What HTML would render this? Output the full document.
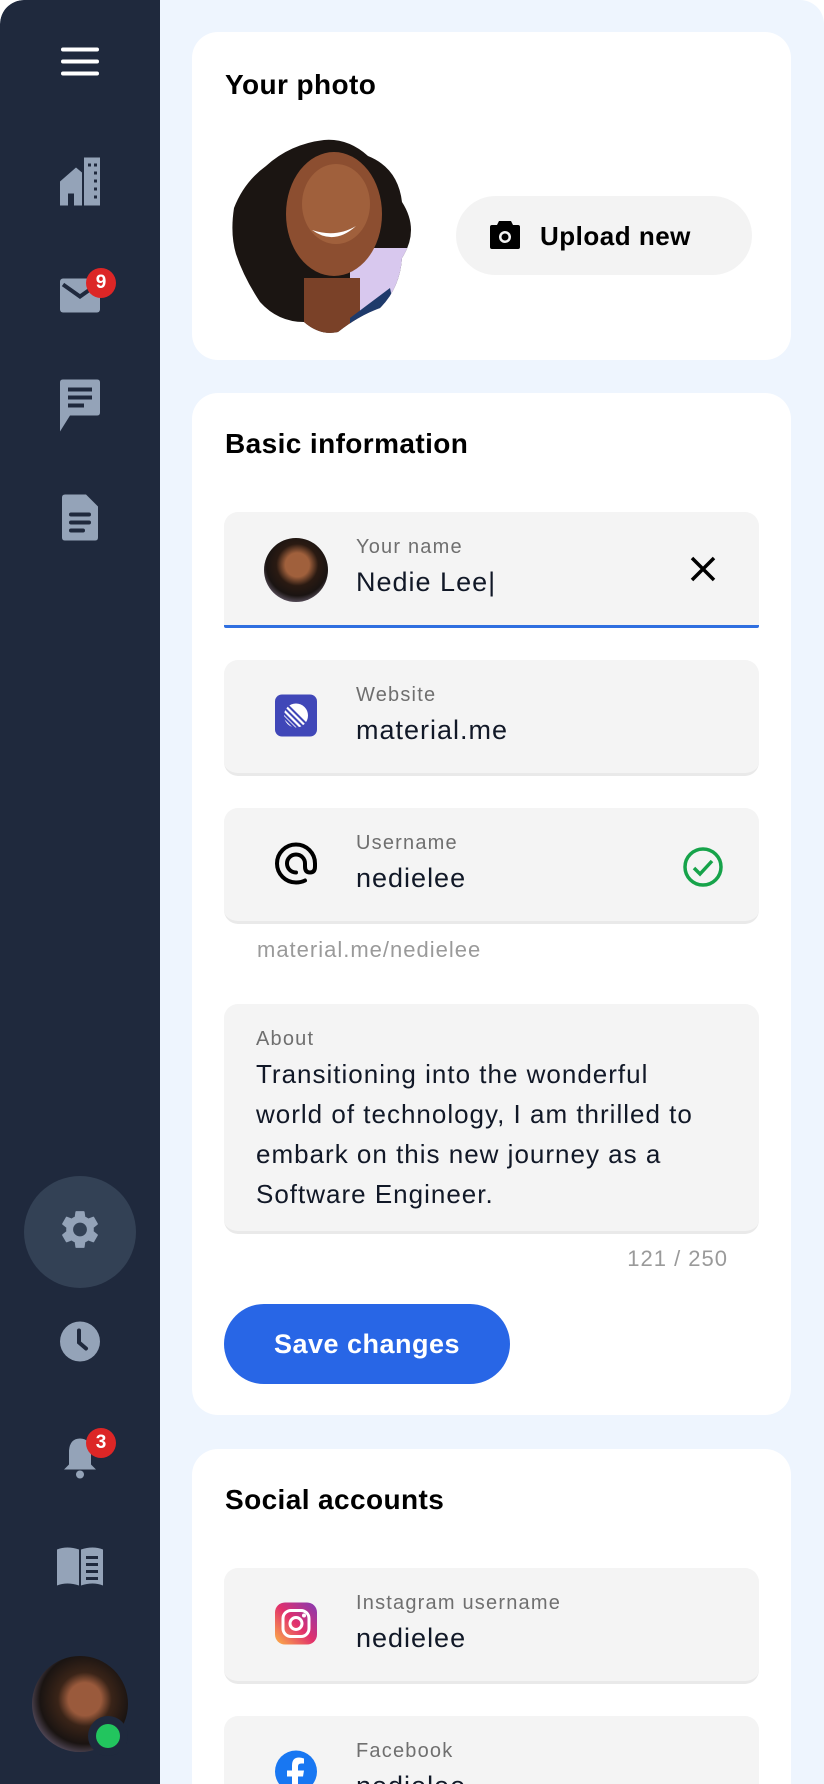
<!DOCTYPE html>
<html><head><meta charset="utf-8"><style>
*{box-sizing:border-box;margin:0;padding:0}
body{width:824px;height:1784px;overflow:hidden;background:#fff;font-family:"Liberation Sans",sans-serif;position:relative}
.page{position:absolute;left:0;top:0;width:824px;height:1784px;background:#eef5fe;border-radius:24px 24px 0 0;overflow:hidden}
.side{position:absolute;left:0;top:0;width:160px;height:1784px;background:#1f293d;border-top-left-radius:24px}
.ic{position:absolute;left:80px;transform:translate(-50%,-50%)}
.badge{position:absolute;width:30px;height:30px;border-radius:50%;background:#dc2626;color:#fff;font-size:19px;font-weight:bold;text-align:center;line-height:30px}
.card{position:absolute;left:192px;width:599px;background:#fff;border-radius:26px}
h2{position:absolute;left:33px;font-size:28px;font-weight:bold;color:#000;letter-spacing:0.4px}
.field{position:absolute;left:32px;width:535px;height:116px;background:#f4f4f4;border-radius:14px;border-bottom:3px solid #e9e9e9}
.lab{position:absolute;left:132px;top:24px;font-size:20px;color:#6f6f6f;letter-spacing:1.2px}
.val{position:absolute;left:132px;top:55px;font-size:27px;color:#111827;letter-spacing:1px}
.fi{position:absolute;left:72px;top:58px;transform:translate(-50%,-50%)}
</style></head><body>
<div class="page">
<div class="side">
  <div class="ic" style="top:64px"><svg width="38" height="28"><rect y="0" width="38" height="4" rx="2" fill="#fff"/><rect y="12" width="38" height="4" rx="2" fill="#fff"/><rect y="24" width="38" height="4" rx="2" fill="#fff"/></svg></div>
  <div class="ic" style="top:184px"><svg width="40" height="48" viewBox="0 0 40 48"><path d="M0 24 L16 10 L22 15 V48 H14 V36 H8 V48 H0Z" fill="#94a3b8"/><rect x="24" y="0" width="16" height="48" fill="#94a3b8"/><g fill="#1f293d"><rect x="28" y="6" width="3" height="3"/><rect x="34" y="6" width="3" height="3"/><rect x="34" y="14" width="3" height="3"/><rect x="34" y="22" width="3" height="3"/><rect x="34" y="30" width="3" height="3"/><rect x="34" y="38" width="3" height="3"/></g></svg></div>
  <div class="ic" style="top:298px"><svg width="40" height="34"><rect width="40" height="34" rx="3" fill="#94a3b8"/><path d="M3 6 L20 18 L37 6" stroke="#1f293d" stroke-width="4" fill="none"/></svg></div>
  <div class="badge" style="left:86px;top:268px">9</div>
  <div class="ic" style="top:408px"><svg width="40" height="52" viewBox="0 0 40 52"><path d="M3 0 H37 Q40 0 40 3 V33 Q40 36 37 36 H10 L0 52 V3 Q0 0 3 0Z" fill="#94a3b8"/><rect x="8" y="8" width="24" height="4" fill="#1f293d"/><rect x="8" y="16" width="24" height="4" fill="#1f293d"/><rect x="8" y="24" width="16" height="4" fill="#1f293d"/></svg></div>
  <div class="ic" style="top:520px"><svg width="36" height="46" viewBox="0 0 36 46"><path d="M3 0 H24 L36 12 V43 Q36 46 33 46 H3 Q0 46 0 43 V3 Q0 0 3 0Z" fill="#94a3b8"/><rect x="7" y="18" width="22" height="4" rx="2" fill="#1f293d"/><rect x="7" y="26" width="22" height="4" rx="2" fill="#1f293d"/><rect x="7" y="34" width="16" height="4" rx="2" fill="#1f293d"/></svg></div>
  <div style="position:absolute;left:24px;top:1176px;width:112px;height:112px;border-radius:50%;background:#334155"></div>
  <div class="ic" style="top:1232px"><svg width="46" height="48" viewBox="0 0 24 24"><path fill="#94a3b8" d="M19.14 12.94c.04-.3.06-.61.06-.94 0-.32-.02-.64-.07-.94l2.030-1.58a.49.49 0 00.12-.61l-1.92-3.32a.488.488 0 00-.59-.22l-2.39.96c-.5-.38-1.03-.7-1.620-.94l-.36-2.54a.484.484 0 00-.48-.41h-3.84c-.24 0-.43.17-.47.41l-.36 2.54c-.59.24-1.13.57-1.62.94l-2.390-.96c-.22-.08-.47 0-.59.22L2.74 8.87c-.12.21-.08.47.12.61l2.03 1.58c-.05.3-.09.63-.09.94s.02.64.07.94l-2.03 1.58a.49.49 0 00-.12.61l1.92 3.32c.12.22.37.29.59.22l2.39-.96c.5.38 1.03.7 1.62.94l.36 2.54c.05.24.24.41.48.41h3.84c.24 0 .44-.17.47-.41l.36-2.54c.59-.24 1.13-.56 1.62-.94l2.39.96c.22.08.47 0 .59-.22l1.92-3.32c.12-.22.07-.47-.12-.61l-2.01-1.58zM12 15.6A3.6 3.6 0 1112 8.4a3.6 3.6 0 010 7.2z"/></svg></div>
  <div class="ic" style="top:1344px"><svg width="40" height="40"><circle cx="20" cy="20" r="20" fill="#94a3b8"/><path d="M19 9 V21 L26 27" stroke="#1f293d" stroke-width="4" fill="none" stroke-linecap="round"/></svg></div>
  <div class="ic" style="top:1460px"><svg width="34" height="42" viewBox="0 0 34 42"><path d="M17 2 Q27 2 28 14 V28 L33 33 H1 L6 28 V14 Q7 2 17 2Z" fill="#94a3b8"/><circle cx="17" cy="38" r="4" fill="#94a3b8"/></svg></div>
  <div class="badge" style="left:86px;top:1428px">3</div>
  <div class="ic" style="top:1570px"><svg width="46" height="44" viewBox="0 0 46 44"><path d="M0 4 Q10 0 22 4 V40 Q10 36 0 40Z" fill="#94a3b8"/><path d="M24 4 Q36 0 46 4 V40 Q36 36 24 40Z" fill="#94a3b8"/><g stroke="#1f293d" stroke-width="3"><path d="M29 12 H41 M29 19 H41 M29 26 H41 M29 33 H41"/></g></svg></div>
  <div style="position:absolute;left:32px;top:1656px;width:96px;height:96px;border-radius:50%;background:radial-gradient(circle at 55% 45%,#9a5a3c 0 22%,#3a2418 36%,#1a1412 60%,#b9a9d8 100%)"></div>
  <div style="position:absolute;left:88px;top:1716px;width:40px;height:40px;border-radius:50%;background:#1f293d"></div>
  <div style="position:absolute;left:96px;top:1724px;width:24px;height:24px;border-radius:50%;background:#22c55e"></div>
</div>

<div class="card" style="top:32px;height:328px">
  <h2 style="top:37px">Your photo</h2>
  <svg style="position:absolute;left:38px;top:106px" width="188" height="196" viewBox="0 0 188 196">
    <defs><clipPath id="bl"><path d="M94 2 Q118 0 138 18 Q168 30 172 64 Q190 92 172 120 Q170 150 150 170 Q128 178 108 194 Q90 198 74 184 Q48 184 30 164 Q14 140 6 116 Q0 96 4 70 Q14 44 36 28 Q60 6 94 2Z"/></clipPath></defs>
    <g clip-path="url(#bl)"><rect width="188" height="196" fill="#1b1512"/><rect x="120" y="110" width="70" height="90" fill="#d8c8ee"/><ellipse cx="104" cy="76" rx="48" ry="62" fill="#8c4e30"/><ellipse cx="106" cy="66" rx="34" ry="40" fill="#a0603c"/><path d="M82 92 Q104 108 126 88 Q106 100 82 92Z" fill="#fff"/><rect x="74" y="140" width="56" height="60" fill="#7a4128"/><path d="M120 180 L160 150 L170 196 H120Z" fill="#1e3a6b"/></g>
  </svg>
  <div style="position:absolute;left:264px;top:164px;width:296px;height:79px;border-radius:40px;background:#f3f3f3">
    <svg style="position:absolute;left:34px;top:25px" width="30" height="28" viewBox="0 0 30 28"><path d="M9 0 H21 L23 4 H28 Q30 4 30 6 V26 Q30 28 28 28 H2 Q0 28 0 26 V6 Q0 4 2 4 H7Z" fill="#000"/><circle cx="15" cy="16" r="6" fill="#f3f3f3"/><circle cx="15" cy="16" r="3.5" fill="#000"/></svg>
    <div style="position:absolute;left:84px;top:25px;font-size:26px;font-weight:bold;color:#000;letter-spacing:0.5px">Upload new</div>
  </div>
</div>

<div class="card" style="top:393px;height:1022px">
  <h2 style="top:35px">Basic information</h2>
  <div class="field" style="top:119px;border-bottom:3px solid #2f6fe0;border-radius:14px 14px 2px 2px;height:116px">
    <div class="fi" style="width:64px;height:64px;border-radius:50%;background:radial-gradient(circle at 52% 42%,#a0603c 0 24%,#2a1a12 42%,#1a1412 62%,#c9b9e0 100%)"></div>
    <div class="lab">Your name</div><div class="val">Nedie Lee|</div>
    <svg style="position:absolute;left:466px;top:44px" width="26" height="26"><path d="M2 2 L24 24 M24 2 L2 24" stroke="#000" stroke-width="3.5"/></svg>
  </div>
  <div class="field" style="top:267px">
    <div class="fi"><svg width="42" height="42" viewBox="0 0 42 42"><rect width="42" height="42" rx="7" fill="#4047b8"/><circle cx="21" cy="21" r="12" fill="#fff"/><g stroke="#4047b8" stroke-width="2"><path d="M8 18 L24 34 M8 22 L20 34 M10 14 L28 32 M12 10 L31 29"/></g></svg></div>
    <div class="lab">Website</div><div class="val">material.me</div>
  </div>
  <div class="field" style="top:415px">
    <div class="fi"><svg width="42" height="42" viewBox="0 0 42 42"><path d="M30 38 Q26 40 21 40 A19 19 0 1 1 40 21 V24 Q40 30 35 30 Q30 30 30 24 V21 A9 9 0 1 0 21 30" stroke="#000" stroke-width="4" fill="none" stroke-linecap="round"/></svg></div>
    <div class="lab">Username</div><div class="val">nedielee</div>
    <svg style="position:absolute;left:458px;top:38px" width="42" height="42"><circle cx="21" cy="21" r="18" stroke="#16a34a" stroke-width="3.5" fill="none"/><path d="M12 22 L18 28 L30 15" stroke="#16a34a" stroke-width="3.5" fill="none"/></svg>
  </div>
  <div style="position:absolute;left:65px;top:544px;font-size:22px;color:#9a9a9a;letter-spacing:1px">material.me/nedielee</div>
  <div class="field" style="top:611px;height:230px">
    <div style="position:absolute;left:32px;top:24px;font-size:20px;color:#6f6f6f;letter-spacing:1.2px">About</div>
    <div style="position:absolute;left:32px;top:50px;width:462px;font-size:26px;line-height:40px;color:#111827;letter-spacing:1px">Transitioning into the wonderful world of technology, I am thrilled to embark on this new journey as a Software Engineer.</div>
  </div>
  <div style="position:absolute;right:63px;top:853px;font-size:22px;color:#9a9a9a;letter-spacing:1px">121 / 250</div>
  <div style="position:absolute;left:32px;top:911px;width:286px;height:80px;border-radius:40px;background:#2866e6;color:#fff;font-size:27px;font-weight:bold;text-align:center;line-height:80px;letter-spacing:0.5px">Save changes</div>
</div>

<div class="card" style="top:1449px;height:400px">
  <h2 style="top:35px">Social accounts</h2>
  <div class="field" style="top:119px">
    <div class="fi"><svg width="42" height="42" viewBox="0 0 42 42"><defs><linearGradient id="ig" x1="0" y1="1" x2="1" y2="0"><stop offset="0" stop-color="#fdb446"/><stop offset="0.5" stop-color="#e1306c"/><stop offset="1" stop-color="#833ab4"/></linearGradient></defs><rect width="42" height="42" rx="10" fill="url(#ig)"/><rect x="8" y="8" width="26" height="26" rx="8" stroke="#fff" stroke-width="3" fill="none"/><circle cx="21" cy="21" r="6" stroke="#fff" stroke-width="3" fill="none"/><circle cx="29" cy="13" r="2" fill="#fff"/></svg></div>
    <div class="lab">Instagram username</div><div class="val">nedielee</div>
  </div>
  <div class="field" style="top:267px">
    <div class="fi"><svg width="42" height="42" viewBox="0 0 42 42"><circle cx="21" cy="21" r="21" fill="#1877f2"/><path d="M23 42 V26 H28 L29 20 H23 V16 Q23 13 26 13 H29 V8 Q26 7 24 7 Q17 7 17 15 V20 H12 V26 H17 V42Z" fill="#fff"/></svg></div>
    <div class="lab">Facebook</div><div class="val">nedielee</div>
  </div>
</div>
</div>
</body></html>
